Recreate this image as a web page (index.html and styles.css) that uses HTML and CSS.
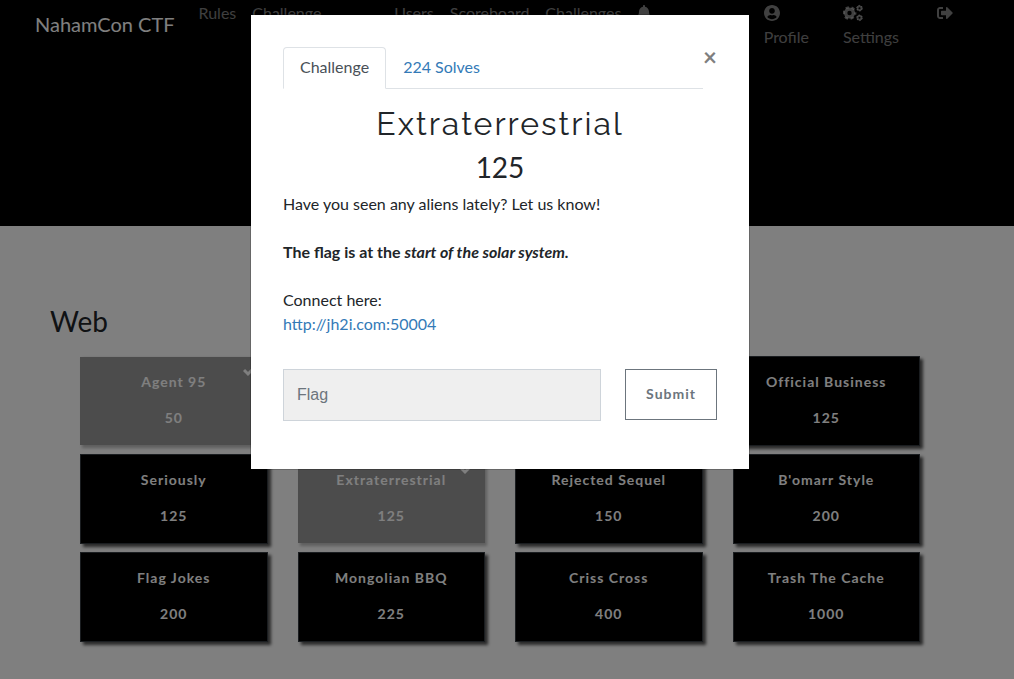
FILE: index.html
```html
<!DOCTYPE html>
<html lang="en">
<head>
<meta charset="utf-8">
<meta name="viewport" content="width=device-width, initial-scale=1">
<title>NahamCon CTF</title>
<link rel="stylesheet" href="styles.css">
</head>
<body>
<header class="hero">
  <nav class="navbar">
    <a class="brand" href="#">NahamCon CTF</a>
    <div class="nav-main">
      <a href="#">Rules</a>
      <a class="nav-wide" href="#">Challenge</a>
      <a href="#">Users</a>
      <a href="#">Scoreboard</a>
      <a href="#">Challenges</a>
      <a href="#" aria-label="Notifications"><svg width="14" height="16" viewBox="0 0 448 512"><path d="M224 512c35.300 0 63.900-28.600 63.900-64H160.100c0 35.400 28.600 64 63.900 64zm215.400-149.700c-19.300-20.800-55.500-52-55.500-154.300 0-77.700-54.500-139.900-127.900-155.200V32c0-17.700-14.300-32-32-32s-32 14.300-32 32v20.800C118.600 68.100 64.100 130.300 64.100 208c0 102.300-36.200 133.500-55.500 154.300C2.600 368.700 0 376.400 0 384c.1 16.400 13 32 32.100 32h383.800c19.100 0 32-15.600 32.100-32 0-7.600-2.600-15.300-8.600-21.700z"/></svg></a>
    </div>
    <div class="nav-user">
      <a href="#"><svg width="16" height="16" viewBox="0 0 496 512"><path d="M248 8C111 8 0 119 0 256s111 248 248 248 248-111 248-248S385 8 248 8zm0 96c48.600 0 88 39.400 88 88s-39.400 88-88 88-88-39.400-88-88 39.400-88 88-88zm0 344c-58.700 0-111.300-26.600-146.500-68.200 18.800-35.400 55.600-59.800 98.500-59.800 2.400 0 4.800.4 7.100 1.100 13 4.200 26.600 6.900 40.900 6.900s28-2.700 40.900-6.900c2.300-.7 4.700-1.100 7.100-1.100 42.900 0 79.700 24.400 98.500 59.800C359.300 421.400 306.700 448 248 448z"/></svg><span>Profile</span></a>
      <a href="#"><svg width="20" height="16" viewBox="0 0 20 16"><g fill="none" stroke="currentColor"><circle cx="6.500" cy="8" r="3.900" stroke-width="3.400"/><circle cx="6.500" cy="8" r="5.900" stroke-width="2" stroke-dasharray="3.400 2.779" stroke-dashoffset="1.700"/><circle cx="16.500" cy="3.200" r="1.900" stroke-width="1.700"/><circle cx="16.500" cy="3.200" r="2.800" stroke-width="1" stroke-dasharray="1.700 1.232"/><circle cx="16.500" cy="12.800" r="1.900" stroke-width="1.700"/><circle cx="16.500" cy="12.800" r="2.800" stroke-width="1" stroke-dasharray="1.700 1.232"/></g></svg><span>Settings</span></a>
      <a href="#" aria-label="Logout"><svg width="16" height="16" viewBox="0 0 512 512"><path d="M497 273L329 441c-15 15-41 4.500-41-17v-96H152c-13.300 0-24-10.700-24-24v-96c0-13.300 10.700-24 24-24h136V88c0-21.400 25.900-32 41-17l168 168c9.300 9.400 9.300 24.600 0 34zM192 436v-40c0-6.600-5.400-12-12-12H96c-17.700 0-32-14.300-32-32V160c0-17.700 14.300-32 32-32h84c6.600 0 12-5.400 12-12V76c0-6.600-5.400-12-12-12H96c-53 0-96 43-96 96v192c0 53 43 96 96 96h84c6.600 0 12-5.400 12-12z"/></svg></a>
    </div>
  </nav>
</header>

<main class="board">
  <h3 class="category">Web</h3>
  <div class="grid">
    <button class="card solved"><svg class="check" width="14" height="14" viewBox="0 0 14 14"><path d="M1 5l4 4L13 1"/></svg><span>Agent 95</span><span>50</span></button>
    <button class="card"></button>
    <button class="card"></button>
    <button class="card"><span>Official Business</span><span>125</span></button>
    <button class="card"><span>Seriously</span><span>125</span></button>
    <button class="card solved"><svg class="check" width="14" height="14" viewBox="0 0 14 14"><path d="M1 5l4 4L13 1"/></svg><span>Extraterrestrial</span><span>125</span></button>
    <button class="card"><span>Rejected Sequel</span><span>150</span></button>
    <button class="card"><span>B'omarr Style</span><span>200</span></button>
    <button class="card"><span>Flag Jokes</span><span>200</span></button>
    <button class="card"><span>Mongolian BBQ</span><span>225</span></button>
    <button class="card"><span>Criss Cross</span><span>400</span></button>
    <button class="card"><span>Trash The Cache</span><span>1000</span></button>
  </div>
</main>

<div class="backdrop">
  <section class="modal" role="dialog" aria-modal="true" aria-labelledby="modal-title">
    <div class="modal-top">
      <div class="tabs">
        <a class="tab active" href="#">Challenge</a>
        <a class="tab" href="#">224 Solves</a>
      </div>
      <button class="close" aria-label="Close">×</button>
    </div>
    <h2 class="title" id="modal-title">Extraterrestrial</h2>
    <h3 class="points">125</h3>
    <p>Have you seen any aliens lately? Let us know!</p>
    <p><strong>The flag is at the <em>start of the solar system.</em></strong></p>
    <p>Connect here:<br><a href="#">http://jh2i.com:50004</a></p>
    <form class="answer">
      <input class="flag" type="text" placeholder="Flag" aria-label="Flag">
      <button class="submit" type="button">Submit</button>
    </form>
  </section>
</div>
</body>
</html>
```

FILE: styles.css
```css
* { box-sizing: border-box; }

body {
  margin: 0;
  overflow: hidden;
  background: #fff;
  color: #212529;
  font: 16px/24px Lato, sans-serif;
}

a { color: #337ab7; text-decoration: none; }
h2, h3, p { margin: 0; font-weight: 400; }
button { font-family: inherit; }

/* Header */
.hero { min-height: 226px; background: #000; }
.navbar { display: flex; align-items: flex-start; padding: 1px 61px 0 35px; }
.navbar a { color: rgba(255, 255, 255, .5); }
.navbar svg { display: block; height: 24px; fill: currentColor; }
.navbar .brand { margin: 8px 24px 0 0; color: #fff; font-size: 20px; line-height: 30px; }
.nav-main { display: flex; gap: 16px; }
.nav-wide { min-width: 126px; }
.nav-user { display: flex; gap: 34px; margin-left: auto; }
.nav-user a { display: flex; flex-direction: column; align-items: flex-start; }
.nav-user a:last-child { margin-left: 4px; }

/* Challenge board */
.board { padding: 78px 94px 32px 80px; }
.category { margin: 0 0 18px -30px; font-size: 28px; line-height: 34px; }
.grid { display: grid; grid-template-columns: repeat(4, 1fr); gap: 8px 30px; }
.card {
  position: relative;
  display: flex;
  flex-direction: column;
  gap: 16px;
  align-items: center;
  min-height: 90px;
  padding: 15px 8px;
  border: 1px solid #343a40;
  background: #000;
  box-shadow: 3px 3px 3px #555;
  color: #fff;
  font-size: 14px;
  font-weight: 700;
  line-height: 20px;
  letter-spacing: 1px;
}
.solved {
  border-color: transparent;
  border-width: 1px 0;
  background: #999 padding-box;
  box-shadow: 2px 2px 3px #bbb;
}
.check { position: absolute; top: 8px; right: 11px; fill: none; stroke: #fff; stroke-width: 3; }

/* Dialog */
.backdrop {
  position: fixed;
  inset: 0;
  padding: 14px 14px 0 0;
  background: rgba(0, 0, 0, .5);
}
.modal {
  max-width: 500px;
  margin: 0 auto;
  padding: 32px 32px 48px;
  border: 1px solid rgba(0, 0, 0, .2);
  background: #fff;
  background-clip: padding-box;
}
.modal-top { display: flex; align-items: flex-start; margin-bottom: 16px; }
.tabs { display: flex; flex: 1; border-bottom: 1px solid #dee2e6; }
.tab { margin-bottom: -1px; padding: 7px 16px 9px; border: 1px solid transparent; border-radius: 4px 4px 0 0; }
.active { border-color: #dee2e6 #dee2e6 #fff; background: #fff; color: #495057; }
.close {
  width: 14px;
  padding: 0;
  border: 0;
  background: none;
  color: #7f7f7f;
  font-size: 24px;
  font-weight: 700;
  line-height: 20px;
}
.title { font-family: Raleway, Lato, sans-serif; font-size: 32px; line-height: 38px; letter-spacing: 2px; text-align: center; }
.points { margin: 7px 0 8px; font-size: 28px; line-height: 34px; text-align: center; }
.modal p { margin-bottom: 24px; }
.answer { display: flex; align-items: flex-start; gap: 24px; padding-top: 9px; }
.flag {
  flex: 1;
  min-width: 0;
  height: 52px;
  padding: 0 13px;
  border: 1px solid #ced4da;
  background: #efefef;
  font: 16px "Liberation Sans", sans-serif;
}
.flag::placeholder { color: #6c757d; }
.submit {
  height: 51px;
  padding: 0 20px 2px;
  border: 1px solid #6c757d;
  background: #fff;
  color: #6c757d;
  font-size: 14px;
  font-weight: 700;
  letter-spacing: 1px;
}
```
